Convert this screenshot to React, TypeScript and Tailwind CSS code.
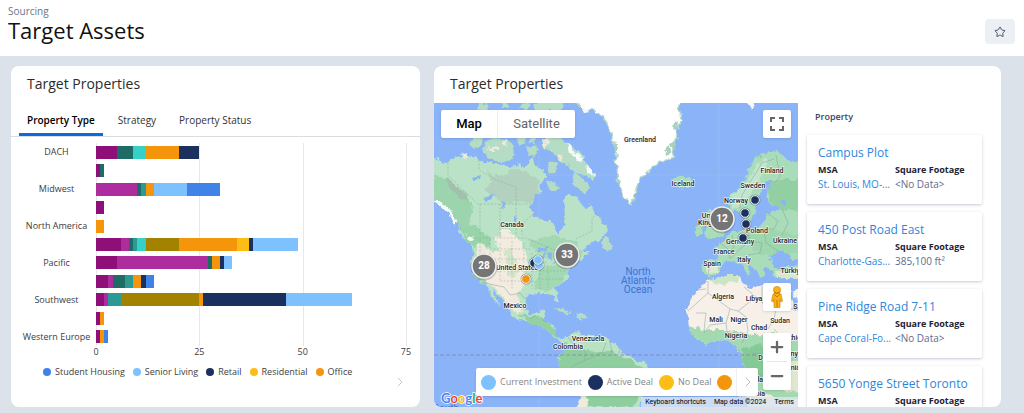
import React, { useState } from 'react';
import { ChevronRight, Minus, Plus, Star } from 'lucide-react';

interface Segment {
  color: string;
  value: number;
}

interface Region {
  name: string;
  segments: Segment[];
}

interface Property {
  id: number;
  name: string;
  msa: string;
  squareFootage: string;
}

const AXIS_MAX = 75;

const PURPLE = '#8f0f78';
const MAGENTA = '#ad2d9f';
const PINE = '#1f6b66';
const TEAL = '#2b9a93';
const AQUA = '#36d0c8';
const OLIVE = '#a38200';
const ORANGE = '#f5950c';
const YELLOW = '#fcbd14';
const NAVY = '#1c305f';
const SKY = '#7dc1ff';
const BLUE = '#4083e8';

const regions: Region[] = [
  {
    name: 'DACH',
    segments: [
      { color: PURPLE, value: 5 },
      { color: PINE, value: 4 },
      { color: AQUA, value: 3 },
      { color: ORANGE, value: 8 },
      { color: NAVY, value: 5 },
    ],
  },
  {
    name: '',
    segments: [
      { color: PURPLE, value: 1 },
      { color: PINE, value: 1 },
    ],
  },
  {
    name: 'Midwest',
    segments: [
      { color: MAGENTA, value: 10 },
      { color: PINE, value: 1 },
      { color: TEAL, value: 1 },
      { color: ORANGE, value: 2 },
      { color: SKY, value: 8 },
      { color: BLUE, value: 8 },
    ],
  },
  { name: '', segments: [{ color: PURPLE, value: 2 }] },
  { name: 'North America', segments: [{ color: ORANGE, value: 2 }] },
  {
    name: '',
    segments: [
      { color: PURPLE, value: 6 },
      { color: MAGENTA, value: 2 },
      { color: PINE, value: 1 },
      { color: TEAL, value: 1 },
      { color: AQUA, value: 2 },
      { color: OLIVE, value: 8 },
      { color: ORANGE, value: 14 },
      { color: YELLOW, value: 3 },
      { color: NAVY, value: 1 },
      { color: SKY, value: 11 },
    ],
  },
  {
    name: 'Pacific',
    segments: [
      { color: PURPLE, value: 5 },
      { color: MAGENTA, value: 22 },
      { color: PINE, value: 1 },
      { color: ORANGE, value: 2 },
      { color: NAVY, value: 1 },
      { color: SKY, value: 2 },
    ],
  },
  {
    name: '',
    segments: [
      { color: PURPLE, value: 3 },
      { color: MAGENTA, value: 1 },
      { color: PINE, value: 3 },
      { color: TEAL, value: 2 },
      { color: ORANGE, value: 2 },
      { color: NAVY, value: 1 },
      { color: BLUE, value: 2 },
    ],
  },
  {
    name: 'Southwest',
    segments: [
      { color: PURPLE, value: 2 },
      { color: MAGENTA, value: 1 },
      { color: TEAL, value: 3 },
      { color: OLIVE, value: 19 },
      { color: ORANGE, value: 1 },
      { color: NAVY, value: 20 },
      { color: SKY, value: 16 },
    ],
  },
  {
    name: '',
    segments: [
      { color: PURPLE, value: 1 },
      { color: ORANGE, value: 1 },
    ],
  },
  {
    name: 'Western Europe',
    segments: [
      { color: PURPLE, value: 1 },
      { color: ORANGE, value: 1 },
      { color: BLUE, value: 1 },
    ],
  },
];

const chartLegend = [
  { label: 'Student Housing', dot: 'bg-[#4083e8]' },
  { label: 'Senior Living', dot: 'bg-[#7dc1ff]' },
  { label: 'Retail', dot: 'bg-[#1c305f]' },
  { label: 'Residential', dot: 'bg-[#fcbd14]' },
  { label: 'Office', dot: 'bg-[#f5950c]' },
];

const mapLegend = [
  { label: 'Current Investment', dot: 'bg-[#7dc1ff]' },
  { label: 'Active Deal', dot: 'bg-[#1c305f]' },
  { label: 'No Deal', dot: 'bg-[#fcbd14]' },
  { label: '', dot: 'bg-[#f5950c]' },
];

const properties: Property[] = [
  { id: 1, name: 'Campus Plot', msa: 'St. Louis, MO-...', squareFootage: '<No Data>' },
  { id: 2, name: '450 Post Road East', msa: 'Charlotte-Gas...', squareFootage: '385,100 ft²' },
  { id: 3, name: 'Pine Ridge Road 7-11', msa: 'Cape Coral-Fo...', squareFootage: '<No Data>' },
  { id: 4, name: '5650 Yonge Street Toronto', msa: '<No Data>', squareFootage: '<No Data>' },
];

const places = [
  { name: 'Canada', x: 78, y: 124 },
  { name: 'Greenland', x: 206, y: 39 },
  { name: 'Iceland', x: 249, y: 83 },
  { name: 'Finland', x: 338, y: 70 },
  { name: 'Sweden', x: 319, y: 85 },
  { name: 'Norway', x: 302, y: 100 },
  { name: 'United', x: 278, y: 115 },
  { name: 'Kingdom', x: 278, y: 122 },
  { name: 'Poland', x: 323, y: 130 },
  { name: 'Germany', x: 306, y: 141 },
  { name: 'Ukraine', x: 351, y: 140 },
  { name: 'France', x: 290, y: 151 },
  { name: 'Italy', x: 310, y: 159 },
  { name: 'Spain', x: 278, y: 163 },
  { name: 'Türkiye', x: 358, y: 170 },
  { name: 'Algeria', x: 289, y: 196 },
  { name: 'Libya', x: 320, y: 198 },
  { name: 'Saudi Arabia', x: 379, y: 206 },
  { name: 'Mali', x: 282, y: 219 },
  { name: 'Niger', x: 305, y: 219 },
  { name: 'Sudan', x: 346, y: 220 },
  { name: 'Chad', x: 325, y: 227 },
  { name: 'Nigeria', x: 302, y: 235 },
  { name: 'Ethiopia', x: 364, y: 237 },
  { name: 'Kenya', x: 358, y: 253 },
  { name: 'DRC', x: 331, y: 257 },
  { name: 'Tanzania', x: 352, y: 267 },
  { name: 'Angola', x: 318, y: 279 },
  { name: 'Namibia', x: 318, y: 293 },
  { name: 'United States', x: 83, y: 167 },
  { name: 'Mexico', x: 81, y: 205 },
  { name: 'Venezuela', x: 154, y: 238 },
  { name: 'Colombia', x: 134, y: 246 },
];

const clusters = [
  { count: 28, x: 50, y: 163 },
  { count: 33, x: 133, y: 152 },
  { count: 12, x: 288, y: 116 },
];

const pins = [
  { color: NAVY, x: 321, y: 97 },
  { color: NAVY, x: 311, y: 110 },
  { color: NAVY, x: 312, y: 121 },
  { color: NAVY, x: 309, y: 135 },
  { color: NAVY, x: 100, y: 160 },
  { color: SKY, x: 105, y: 162 },
  { color: SKY, x: 104, y: 157 },
  { color: ORANGE, x: 92, y: 176 },
];

const northAmerica =
  'M-5 53 L6 56 L13 60 L21 54 L31 52 L43 55 L51 60 L63 61 L76 64 L84 61 L93 64 L95 57 L99 55 L101 62 L108 67 L113 74 L106 82 L108 89 L99 94 L97 104 L99 115 L108 117 L119 120 L122 125 L124 132 L129 124 L131 114 L130 97 L133 92 L141 92 L148 99 L151 107 L156 100 L161 110 L168 120 L174 126 L172 134 L160 138 L153 144 L146 148 L156 148 L148 156 L143 157 L138 164 L133 170 L133 175 L128 180 L121 186 L123 194 L125 199 L122 199 L119 192 L114 190 L104 190 L96 191 L92 195 L91 205 L96 211 L104 210 L107 208 L112 208 L109 215 L111 220 L119 222 L121 230 L126 235 L134 232 L143 229 L149 232 L163 232 L173 235 L186 244 L188 250 L197 254 L206 258 L214 262 L217 270 L210 284 L204 310 L144 310 L146 294 L133 275 L125 265 L124 255 L130 247 L128 239 L121 235 L114 227 L106 222 L96 219 L86 217 L76 210 L74 204 L68 197 L59 186 L62 196 L66 205 L58 194 L53 182 L46 179 L39 170 L37 160 L39 150 L38 142 L29 135 L24 127 L26 122 L19 112 L11 102 L-5 98 Z';

const arcticIslands =
  'M40 33 L49 34 L47 43 L41 46 L35 42 Z M48 50 L52 38 L60 35 L74 37 L80 46 L78 57 L68 60 L56 56 Z M42 7 L45 2 L52 0 L54 4 L50 8 Z M66 0 L72 0 L74 4 L68 5 Z M86 2 L94 0 L98 5 L90 7 Z M101 8 L100 2 L108 -4 L130 -4 L128 8 Z M82 35 L90 33 L92 40 L86 42 Z M94 34 L101 34 L100 41 L96 40 Z M92 44 L99 42 L104 47 L102 54 L95 52 Z M108 34 L124 34 L132 40 L141 44 L149 52 L152 62 L161 71 L159 76 L150 73 L142 71 L150 78 L155 85 L152 91 L145 86 L138 80 L141 70 L134 62 L125 58 L120 50 L110 44 Z M115 58 L123 60 L121 71 L115 69 Z M113 76 L121 80 L126 85 L119 89 L114 86 Z M168 139 L173 134 L180 143 L176 148 L169 145 Z M118 206 L128 205 L140 210 L132 210 Z M141 211 L150 211 L154 215 L144 216 Z';

const europe =
  'M316 64 L323 55 L331 50 L341 47 L348 51 L354 57 L370 62 L370 176 L341 175 L338 167 L331 165 L329 174 L324 172 L320 166 L314 158 L317 166 L313 172 L311 168 L306 160 L299 157 L291 160 L286 166 L281 173 L273 174 L268 168 L269 157 L283 157 L284 152 L280 144 L288 140 L294 132 L302 128 L308 128 L309 119 L314 127 L326 124 L333 113 L348 104 L336 102 L331 94 L338 79 L333 77 L328 87 L324 97 L321 110 L316 118 L311 117 L307 108 L298 108 L293 100 L298 90 L308 82 L313 72 Z M268 112 L277 106 L282 116 L291 126 L288 133 L275 136 L270 130 L273 120 Z M261 124 L268 121 L269 131 L261 133 Z M238 75 L246 73 L256 74 L259 80 L253 86 L244 85 Z';

const africa =
  'M273 177 L290 173 L306 173 L308 180 L316 185 L328 182 L341 185 L358 187 L370 187 L370 310 L312 310 L314 294 L313 270 L309 260 L306 250 L303 242 L291 237 L271 242 L261 235 L254 224 L252 210 L256 199 L264 187 Z';

const greenland =
  'M144 2 L150 8 L158 7 L166 10 L173 20 L178 34 L182 50 L182 60 L185 80 L191 95 L198 101 L201 89 L206 75 L218 65 L224 60 L241 54 L238 44 L243 35 L241 27 L248 17 L244 7 L250 -5 L140 -5 Z';

const WorldMap: React.FC = () => (
  <svg
    className="block h-full w-full font-[Roboto,sans-serif]"
    viewBox="0 0 364 304"
    preserveAspectRatio="xMidYMid slice"
    role="img"
    aria-label="Map of target properties"
  >
    <defs>
      <filter id="coast" x="-5%" y="-5%" width="110%" height="110%">
        <feTurbulence type="fractalNoise" baseFrequency="0.16" numOctaves="3" seed="4" result="noise" />
        <feDisplacementMap in="SourceGraphic" in2="noise" scale="7" xChannelSelector="R" yChannelSelector="G" />
      </filter>
      <clipPath id="land">
        <path d={northAmerica} />
        <path d={europe} />
        <path d={africa} />
      </clipPath>
    </defs>
    <rect width="364" height="304" fill="#8ab3f8" />
    <path d="M105 0V304 M285 0V304 M0 72H364" stroke="#a3c1f3" strokeWidth="0.5" />

    <g filter="url(#coast)">
      <path d={northAmerica} fill="#b9e2c7" />
      <path d={arcticIslands} fill="#b5dcc4" />
      <path d={europe} fill="#a9dcb9" />
      <path d={africa} fill="#f6f0e9" />
      <path d={greenland} fill="#ffffff" stroke="#b5d9c6" strokeWidth="1.5" />
      <g clipPath="url(#land)">
        {/* tundra and forest tones */}
        <path d="M54 68 L66 74 L78 66 L92 68 L105 78 L104 92 L96 100 L84 98 L72 101 L60 94 L50 86 L58 78 Z" fill="#b2d1bf" />
        <path d="M0 72 L14 76 L30 88 L38 100 L36 124 L26 128 L18 108 L0 98 Z" fill="#9bd4ad" />
        <path d="M12 76 L20 80 L32 92 L34 98 L24 94 L16 86 Z" fill="#a3bfae" />
        <path d="M26 126 L40 122 L56 134 L58 142 L42 144 L32 138 Z" fill="#98d4a9" />
        <path d="M94 138 L118 132 L140 138 L148 150 L138 158 L116 156 L100 148 Z" fill="#a4d8b3" />
        <path d="M106 166 L128 160 L134 168 L126 182 L112 188 L100 184 Z" fill="#a3d9b2" />
        <path d="M39 170 L50 166 L58 176 L52 182 L44 178 Z" fill="#a7dab5" />
        {/* plains and desert */}
        <path d="M60 134 L78 130 L88 140 L94 160 L90 178 L86 188 L80 200 L74 200 L62 186 L50 178 L44 166 L46 156 L52 146 L58 150 L64 146 Z" fill="#f3ebdf" />
        <path d="M42 142 L50 140 L52 150 L46 154 L42 150 Z" fill="#eee7da" />
        <path d="M70 148 L78 146 L84 166 L80 176 L74 172 L72 160 Z" fill="#d3e4cb" />
        <path d="M76 190 L84 194 L88 206 L84 212 L76 204 Z" fill="#f0e9db" />
        <path d="M66 128 L74 126 L76 132 L68 134 Z" fill="#f3ebdf" />
        {/* central and south america */}
        <path d="M84 212 L108 214 L122 228 L126 236 L108 226 Z" fill="#93d0a4" />
        <path d="M126 240 L150 246 L176 248 L200 258 L214 270 L200 304 L150 304 L134 276 L124 266 Z" fill="#8fcf9f" />
        <path d="M150 234 L170 238 L176 246 L160 250 L148 244 Z" fill="#b9e2c3" />
        <path d="M142 292 L152 292 L154 310 L142 310 Z" fill="#f1ebde" />
        {/* europe */}
        <path d="M298 92 L312 80 L320 66 L330 54 L334 58 L326 76 L316 92 L306 104 L298 106 Z" fill="#c1e6cd" />
        <path d="M334 80 L370 74 L370 108 L344 106 L334 98 Z" fill="#92cfa3" />
        <path d="M312 132 L340 126 L370 134 L370 150 L330 152 L318 146 Z" fill="#9ed6ae" />
        <path d="M270 159 L284 159 L284 168 L274 172 Z" fill="#dde8d0" />
        <path d="M336 153 L341 150 L349 148 L358 155 L370 161 L352 164 L340 164 Z" fill="#8ab3f8" />
        <path d="M341 168 L370 166 L370 176 L344 176 Z" fill="#d8e8cf" />
        {/* africa south of the sahel */}
        <path d="M250 222 L270 227 L292 227 L320 232 L338 230 L352 236 L370 236 L370 296 L340 300 L312 296 L300 256 L262 246 Z" fill="#a3d9b1" />
        <path d="M306 246 L326 242 L342 250 L340 268 L322 276 L310 268 Z" fill="#84ca97" />
        <path d="M272 175 L296 172 L306 173 L304 178 L282 182 Z" fill="#cbe5c5" />
        <path d="M346 262 L370 256 L370 290 L350 288 Z" fill="#dfe8cf" />
        <path d="M312 288 L340 292 L340 310 L310 310 Z" fill="#efe8dc" />
        <path d="M355 188 L359 187 L366 210 L362 208 Z" fill="#8ab3f8" />
      </g>
      {/* lakes */}
      <path
        d="M38 74 L46 72 L45 76 L40 78 Z M50 94 L62 90 L58 97 L52 98 Z M68 98 L72 100 L70 107 L67 104 Z M78 112 L82 114 L82 120 L79 117 Z M102 146 L112 144 L114 148 L104 149 Z M108 151 L111 150 L110 159 L107 158 Z M114 149 L119 151 L117 156 L114 153 Z M118 158 L125 155 L124 158 L119 160 Z M347 98 L351 97 L351 101 L348 101 Z"
        fill="#8ab3f8"
      />
      {/* snow, mostly along the pacific range and baffin island */}
      <path
        d="M-2 98 L6 98 L14 104 L18 110 L24 120 L22 123 L14 110 L4 102 Z M133 40 L138 42 L140 48 L147 52 L149 58 L143 57 L136 50 Z M151 62 L156 66 L160 72 L154 70 Z M32 130 L40 136 L38 139 L34 136 Z M146 4 L150 2 L156 9 L150 10 Z M314 1 L319 -1 L320 6 L317 6 Z"
        fill="#f6faf8"
      />
      <path d="M108 35 L114 34 L115 42 L110 44 Z M54 44 L62 43 L64 48 L56 48 Z M122 52 L130 54 L126 58 Z M28 52 L34 50 L36 55 L30 57 Z M68 38 L72 38 L74 43 L70 42 Z" fill="#ece8db" />
      <path
        d="M241 20 L244 18 L243 26 L240 28 Z M236 40 L240 38 L240 46 L236 44 Z M230 46 L235 42 L236 50 L232 52 Z M180 38 L184 44 L182 52 Z M183 62 L186 72 L184 78 Z"
        fill="#a9cfbd"
      />
    </g>

    {/* state and country borders */}
    <g fill="none" stroke="#7f9a8a" strokeWidth="0.5" strokeDasharray="2 1.5" opacity="0.8">
      <path d="M14 60V72L26 84L44 101H97 M45 57V67L62 77L82 84V101 M46 101V133 M66 101V135 M82 101V135 M38 135H92L104 140L118 146L132 150 M99 111L88 121V132 M162 110L158 116V128L142 136" />
      <path d="M46 136V156 M56 136V158 M66 140V178 M78 138V186 M90 140V176 M46 156H92 M56 146H98 M52 168H94 M66 178H100 M98 150V186 M106 160V188 M114 162V188 M98 168H132 M104 176H130" />
    </g>
    <g fill="none" stroke="#8ba296" strokeWidth="0.6" opacity="0.85">
      <path d="M48 179L60 182L70 184L76 192L86 190L91 196 M96 216L102 212 M108 216L112 220 M134 234L140 242L152 248L150 258L140 262L134 270 M150 258L168 250L172 240 M176 238L178 250 M186 246L184 252" />
      <path d="M272 186L262 187 M274 178V190L254 208 M274 190L296 206L304 208L322 194L310 184 M296 206L292 220L276 222L270 230 M304 208L312 214L314 228 M328 183V200L342 206L340 216L334 226 M342 186V206H362 M322 194L342 206 M262 210H272L270 228 M292 220L294 236 M314 228L308 240 M340 226L350 238L346 252 M318 250L344 252 M322 272H340" />
      <path d="M284 158L276 160L274 172 M286 140L294 146L296 156 M298 132L300 144L296 148 M314 128L316 138L306 146L296 156 M316 138L328 140L326 150L314 152 M330 126L332 140L344 148 M306 105L308 92L318 76L328 60L340 56 M342 52L346 74L340 80 M336 112L344 118L340 126L330 126 M348 106L354 120L348 132" />
    </g>

    <path d="M0 252H364" stroke="#8d7fb0" strokeWidth="0.8" strokeDasharray="4 2" />

    <g textAnchor="middle" fontSize="10" fill="#3c74d0">
      <text x="204" y="172">North</text>
      <text x="204" y="181">Atlantic</text>
      <text x="204" y="190">Ocean</text>
      <text x="12" y="309">South</text>
    </g>
    <g
      textAnchor="middle"
      fontSize="7"
      fontWeight="500"
      fill="#1f2326"
      stroke="#ffffff"
      strokeOpacity="0.75"
      strokeWidth="1.5"
      strokeLinejoin="round"
      paintOrder="stroke"
    >
      {places.map(place => (
        <text key={place.name} x={place.x} y={place.y}>
          {place.name}
        </text>
      ))}
    </g>

    {pins.map((pin, index) => (
      <g key={index}>
        <circle cx={pin.x} cy={pin.y} r="5.5" fill="#5f6368" opacity="0.5" />
        <circle cx={pin.x} cy={pin.y} r="4.3" fill={pin.color} stroke="#e6edf5" strokeWidth="1" />
      </g>
    ))}
    {clusters.map(cluster => (
      <g key={cluster.count}>
        <circle cx={cluster.x} cy={cluster.y + 1} r="13.5" fill="#3c4043" opacity="0.25" />
        <circle cx={cluster.x} cy={cluster.y} r="12" fill="#757575" stroke="#eeeeee" strokeWidth="1.6" />
        <text x={cluster.x} y={cluster.y + 3} textAnchor="middle" fontSize="10" fontWeight="800" fill="#ffffff">
          {cluster.count}
        </text>
      </g>
    ))}
  </svg>
);

const GoogleLogo: React.FC = () => (
  <svg className="h-4 w-11" viewBox="0 0 44 16" role="img" aria-label="Google">
    <text
      x="1"
      y="12"
      fontFamily="Lato, sans-serif"
      fontSize="13"
      fontWeight="700"
      stroke="#ffffff"
      strokeWidth="1.5"
      paintOrder="stroke"
    >
      <tspan fill="#4285f4">G</tspan>
      <tspan fill="#ea4335">o</tspan>
      <tspan fill="#fbbc04">o</tspan>
      <tspan fill="#4285f4">g</tspan>
      <tspan fill="#34a853">l</tspan>
      <tspan fill="#ea4335">e</tspan>
    </text>
  </svg>
);

const Pegman: React.FC = () => (
  <svg className="h-6 w-4" viewBox="0 0 16 24" aria-hidden="true">
    <path d="M4 9 Q8 7 12 9 L13.5 16 L11.8 17 L11 14 L11 22.5 H5 L5 14 L4.2 17 L2.5 16 Z" fill="#fbb116" stroke="#d08a10" strokeWidth="0.7" />
    <path d="M8 15 V22 M5.4 9.5 L8 12 L10.6 9.5" fill="none" stroke="#c27a0a" strokeWidth="1" />
    <circle cx="8" cy="5" r="3.6" fill="#fbb116" stroke="#d08a10" strokeWidth="0.7" />
    <path d="M5 7 Q8 9.5 11 7" fill="none" stroke="#c27a0a" strokeWidth="1" />
  </svg>
);

const RegionChart: React.FC = () => (
  <div className="pt-1.5">
    <div className="flex pr-[13px]">
      <div className="flex h-[203px] w-[85px] shrink-0 flex-col pr-2 pl-3.5">
        {regions.map((region, index) => (
          <div key={index} className="flex flex-1 items-center justify-center text-[9px] leading-3 whitespace-nowrap text-[#3d3d3d]">
            {region.name}
          </div>
        ))}
      </div>
      <div className="grid h-[203px] flex-1 border-r border-[#e8e8ea]">
        <div className="col-start-1 row-start-1 grid grid-cols-3">
          <div className="border-l border-[#e8e8ea]" />
          <div className="border-l border-[#e8e8ea]" />
          <div className="border-l border-[#e8e8ea]" />
        </div>
        <div className="z-10 col-start-1 row-start-1 flex flex-col">
          {regions.map((region, index) => (
            <div key={index} className="flex flex-1 items-center">
              {region.segments.map(segment => (
                <div
                  key={segment.color}
                  className="h-[13px]"
                  style={{ width: `${(segment.value / AXIS_MAX) * 100}%`, backgroundColor: segment.color }}
                />
              ))}
            </div>
          ))}
        </div>
      </div>
    </div>
    <div className="flex justify-between pr-2 pl-[79px] text-[9px] leading-3 text-[#3d3d3d]">
      {[0, 25, 50, 75].map(tick => (
        <span key={tick} className="w-3 text-center">
          {tick}
        </span>
      ))}
    </div>
    <div className="flex items-start justify-between pt-1 pr-3 pb-3 pl-8">
      <ul className="flex gap-2 pt-1 text-[9px] leading-3 text-[#3d3d3d]">
        {chartLegend.map(item => (
          <li key={item.label} className="flex items-center gap-1 whitespace-nowrap">
            <span className={`size-2 rounded-full ${item.dot}`} />
            {item.label}
          </li>
        ))}
      </ul>
      <button type="button" aria-label="Next legend items" className="pt-3 text-[#c0cad8]">
        <ChevronRight className="size-4" strokeWidth={1.5} />
      </button>
    </div>
  </div>
);

const PropertyMap: React.FC = () => (
  <div className="relative min-w-0 flex-1 overflow-hidden rounded-bl-lg bg-[#8ab3f8]">
    <div className="absolute inset-0">
      <WorldMap />
    </div>

    <div className="absolute top-[7px] left-[7px] flex h-7 rounded-xs bg-white font-[Roboto,sans-serif] text-[13px] shadow-sm">
      <button type="button" className="w-14 font-medium text-black">
        Map
      </button>
      <button type="button" className="w-[78px] border-l border-[#ececec] text-[#666666]">
        Satellite
      </button>
    </div>

    <button
      type="button"
      aria-label="Toggle fullscreen view"
      className="absolute top-[7px] right-[7px] flex size-7 items-center justify-center rounded-xs bg-white text-[#666666] shadow-sm"
    >
      <svg className="size-[14px]" viewBox="0 0 14 14" fill="none" stroke="currentColor" strokeWidth="2" aria-hidden="true">
        <path d="M1 5V1H5 M9 1H13V5 M13 9V13H9 M5 13H1V9" />
      </svg>
    </button>

    <div className="absolute right-[7px] bottom-[17px] flex w-7 flex-col gap-[22px] text-[#666666]">
      <button type="button" aria-label="Street View" className="flex size-7 items-center justify-center rounded-xs bg-white shadow-sm">
        <Pegman />
      </button>
      <div className="flex flex-col rounded-xs bg-white shadow-sm">
        <button type="button" aria-label="Zoom in" className="flex size-7 items-center justify-center">
          <Plus className="size-[18px]" strokeWidth={3} />
        </button>
        <div className="mx-1 h-px bg-[#e6e6e6]" />
        <button type="button" aria-label="Zoom out" className="flex size-7 items-center justify-center">
          <Minus className="size-[18px]" strokeWidth={3} />
        </button>
      </div>
    </div>

    <div className="absolute bottom-[11px] left-[42px] flex h-7 items-center rounded-xs bg-white shadow-sm">
      <ul className="flex items-center gap-1.5 pl-[5px] text-[9px] text-[#858585]">
        {mapLegend.map(item => (
          <li key={item.dot} className="flex items-center gap-1 whitespace-nowrap">
            <span className={`size-[15px] rounded-full ${item.dot}`} />
            {item.label}
          </li>
        ))}
      </ul>
      <button type="button" aria-label="Next map legend items" className="ml-1 flex h-full w-[22px] items-center justify-center border-l border-[#f0f0f0] text-[#b0bccd]">
        <ChevronRight className="size-4" strokeWidth={1.5} />
      </button>
    </div>

    <div className="absolute bottom-0 left-[6px]">
      <GoogleLogo />
    </div>
    <div className="absolute right-0 bottom-0 flex h-[10px] items-center gap-2 bg-[#dbe5f0]/80 px-1 font-[Roboto,sans-serif] text-[7px] leading-[10px] text-black">
      <button type="button">Keyboard shortcuts</button>
      <span>Map data ©2024</span>
      <a href="#terms">Terms</a>
    </div>
  </div>
);

const PropertyList: React.FC = () => (
  <div className="flex h-[304px] w-[203px] shrink-0 flex-col overflow-y-auto pr-[19px] pl-[9px] [scrollbar-width:none]">
    <h3 className="px-2 pt-2 pb-3 text-[9px] leading-3 font-semibold text-[#3a4466]">Property</h3>
    <ul className="flex flex-col gap-2">
      {properties.map(property => (
        <li key={property.id} className="rounded-xs bg-white px-[11px] pt-2.5 pb-3 shadow-[0_1px_3px_rgba(60,80,110,0.3)]">
          <a href={`#property-${property.id}`} className="block truncate text-[12px] leading-4 text-[#2f86dc]">
            {property.name}
          </a>
          <dl className="grid grid-cols-[75px_1fr] gap-x-0.5 pt-0.5 whitespace-nowrap">
            <div>
              <dt className="text-[9px] leading-[14px] font-bold text-[#1e2233]">MSA</dt>
              <dd className="text-[10px] leading-[15px] text-[#2f86dc]">{property.msa}</dd>
            </div>
            <div>
              <dt className="text-[9px] leading-[14px] font-bold text-[#1e2233]">Square Footage</dt>
              <dd className="text-[10px] leading-[15px] text-[#636b8a]">{property.squareFootage}</dd>
            </div>
          </dl>
        </li>
      ))}
    </ul>
  </div>
);

const tabs = ['Property Type', 'Strategy', 'Property Status'];

const App: React.FC = () => {
  const [activeTab, setActiveTab] = useState('Property Type');

  return (
    <div className="min-h-screen bg-[#dce2ea] font-['Open_Sans','Noto_Sans',sans-serif]">
      <header className="flex items-end justify-between bg-white pt-1 pr-[9px] pb-3 pl-2">
        <div>
          <p className="text-[10px] leading-[14px] text-[#6c7486]">Sourcing</p>
          <h1 className="pb-0.5 text-[22px] leading-6 text-[#111111]">Target Assets</h1>
        </div>
        <button type="button" aria-label="Add to favorites" className="flex h-[25px] w-[30px] items-center justify-center rounded-sm bg-[#ecf0f4] text-[#4a5468]">
          <Star className="size-3" strokeWidth={2} />
        </button>
      </header>

      <main className="grid grid-cols-[409fr_567fr] gap-3.5 pt-2.5 pr-[23px] pb-1.5 pl-[11px]">
        <section className="min-w-0 rounded-lg bg-white">
          <h2 className="px-4 pt-2 text-[14px] leading-5 text-[#2b2b2b]">Target Properties</h2>
          <div role="tablist" className="flex gap-[7px] border-b border-[#d9dce0] px-2 pt-3">
            {tabs.map(tab => (
              <button
                key={tab}
                type="button"
                role="tab"
                aria-selected={tab === activeTab}
                onClick={() => setActiveTab(tab)}
                className={
                  tab === activeTab
                    ? 'rounded-t-xs border-b-3 border-[#0b6bd8] px-2 pt-[7px] pb-[5px] text-[10px] leading-[15px] font-semibold text-black'
                    : 'border-b-3 border-transparent px-2 pt-[7px] pb-[5px] text-[10px] leading-[15px] text-[#333333]'
                }
              >
                {tab}
              </button>
            ))}
          </div>
          <RegionChart />
        </section>

        <section className="min-w-0 rounded-lg bg-white">
          <h2 className="px-4 pt-2 pb-[9px] text-[14px] leading-5 text-[#2b2b2b]">Target Properties</h2>
          <div className="flex">
            <PropertyMap />
            <PropertyList />
          </div>
        </section>
      </main>
    </div>
  );
};

export default App;
